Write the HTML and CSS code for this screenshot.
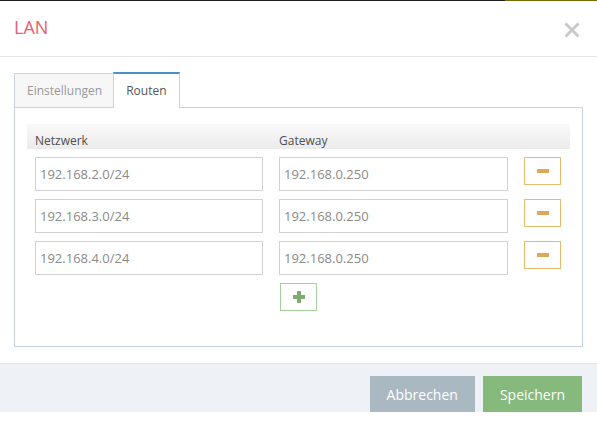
FILE: index.html
```html
<!DOCTYPE html>
<html lang="de">
<head>
<meta charset="utf-8">
<title>LAN</title>
<link rel="stylesheet" href="styles.css">
</head>
<body>
<div class="topbar"><span class="topbar-accent"></span></div>
<div class="modal">
  <div class="modal-header">
    <h4 class="modal-title">LAN</h4>
    <button class="close" type="button" aria-label="Schließen">
      <svg width="16" height="16" viewBox="0 0 16 16"><path d="M1.5 1.5 L14.5 14.5 M14.5 1.5 L1.5 14.5" stroke="#c9c9c9" stroke-width="3" fill="none"/></svg>
    </button>
  </div>
  <div class="modal-body">
    <div class="tabs">
      <div class="tab">Einstellungen</div>
      <div class="tab tab-active">Routen</div>
    </div>
    <div class="panel">
      <div class="grid head">
        <div class="th">Netzwerk</div>
        <div class="th">Gateway</div>
        <div></div>
      </div>
      <div class="grid row">
        <input class="field" type="text" value="192.168.2.0/24">
        <input class="field" type="text" value="192.168.0.250">
        <button class="btn-remove" type="button"><span class="minus"></span></button>
      </div>
      <div class="grid row">
        <input class="field" type="text" value="192.168.3.0/24">
        <input class="field" type="text" value="192.168.0.250">
        <button class="btn-remove" type="button"><span class="minus"></span></button>
      </div>
      <div class="grid row">
        <input class="field" type="text" value="192.168.4.0/24">
        <input class="field" type="text" value="192.168.0.250">
        <button class="btn-remove" type="button"><span class="minus"></span></button>
      </div>
      <div class="grid row">
        <div></div>
        <div><button class="btn-add" type="button"><span class="plus"></span></button></div>
        <div></div>
      </div>
    </div>
  </div>
  <div class="modal-footer">
    <button class="btn btn-cancel" type="button">Abbrechen</button>
    <button class="btn btn-save" type="button">Speichern</button>
  </div>
</div>
</body>
</html>
```
FILE: styles.css
```css
* { box-sizing: border-box; }
html, body { margin: 0; padding: 0; background: #fff; }
body {
  font-family: "Open Sans", "DejaVu Sans", sans-serif;
  width: 597px;
  height: 424px;
  overflow: hidden;
}
.topbar {
  height: 1px;
  background: #1f1f1f;
  display: flex;
  justify-content: flex-end;
}
.topbar-accent {
  width: 92px;
  height: 1px;
  background: #7a6a08;
}
.modal { display: flex; flex-direction: column; }
.modal-header {
  display: flex;
  justify-content: space-between;
  align-items: flex-start;
  padding: 14px 17px 17px 14px;
  border-bottom: 1px solid #e5e5e5;
}
.modal-title {
  margin: 0;
  font-size: 18px;
  line-height: 24px;
  font-weight: 400;
  color: #e6606e;
}
.close {
  margin: 7px 0 0 0;
  padding: 0;
  border: 0;
  background: none;
  width: 16px;
  height: 16px;
  display: block;
}
.close svg { display: block; }
.modal-body {
  padding: 15px 14px 16px 14px;
}
.tabs {
  display: flex;
  align-items: flex-end;
}
.tab {
  font-size: 12px;
  line-height: 17px;
  padding: 8px 11px 8px 12px;
  color: #999;
  background: #f7f7f7;
  border: 1px solid #c9d3dd;
  border-bottom: 0;
}
.tab-active {
  margin-left: -1px;
  color: #555;
  background: #fff;
  border-top: 2px solid #4a8ecb;
  position: relative;
  margin-bottom: -1px;
  padding-right: 12px;
  padding-bottom: 9px;
}
.panel {
  border: 1px solid #c9d3dd;
  padding: 16px 12px 35px 12px;
}
.grid {
  display: grid;
  grid-template-columns: 228px 229px 37px;
  column-gap: 16px;
  padding-left: 8px;
}
.head {
  height: 25px;
  background: linear-gradient(#f9f9f9, #ebebeb);
  padding-top: 9px;
}
.th {
  font-size: 12px;
  line-height: 16px;
  color: #4f4f4f;
  font-weight: 400;
}
.row { margin-top: 8px; align-items: start; }
.field {
  display: block;
  width: 100%;
  height: 34px;
  margin: 0;
  padding: 0 4px;
  border: 1px solid #d2d2d2;
  border-radius: 0;
  font-family: "Open Sans", "DejaVu Sans", sans-serif;
  font-size: 13px;
  color: #8a8a8a;
  background: #fff;
  outline: none;
}
.btn-remove, .btn-add {
  display: flex;
  align-items: center;
  justify-content: center;
  width: 37px;
  height: 28px;
  margin: 0;
  padding: 0;
  background: #fff;
  cursor: pointer;
}
.btn-remove { border: 1px solid #e9b96c; }
.btn-add { border: 1px solid #a5d09d; margin-left: 1px; }
.minus {
  display: block;
  width: 12px;
  height: 4px;
  background: #dea85a;
  margin-top: -1px;
}
.plus {
  display: block;
  position: relative;
  width: 12px;
  height: 12px;
  background:
    linear-gradient(#7dab70, #7dab70) center / 12px 4px no-repeat,
    linear-gradient(#7dab70, #7dab70) center / 4px 12px no-repeat;
}
.modal-footer {
  flex: 1;
  height: 61px;
  display: flex;
  justify-content: flex-end;
  gap: 8px;
  padding: 12px 15px 0 0;
  background: #eef1f6;
  border-top: 1px solid #e1e4e9;
}
.btn {
  height: 36px;
  padding: 0 17px;
  border: 0;
  margin: 0;
  font-family: "Open Sans", "DejaVu Sans", sans-serif;
  font-size: 14px;
  color: #fff;
  cursor: pointer;
}
.btn-cancel { background: #aab8c2; }
.btn-save { background: #86b97c; }
```
